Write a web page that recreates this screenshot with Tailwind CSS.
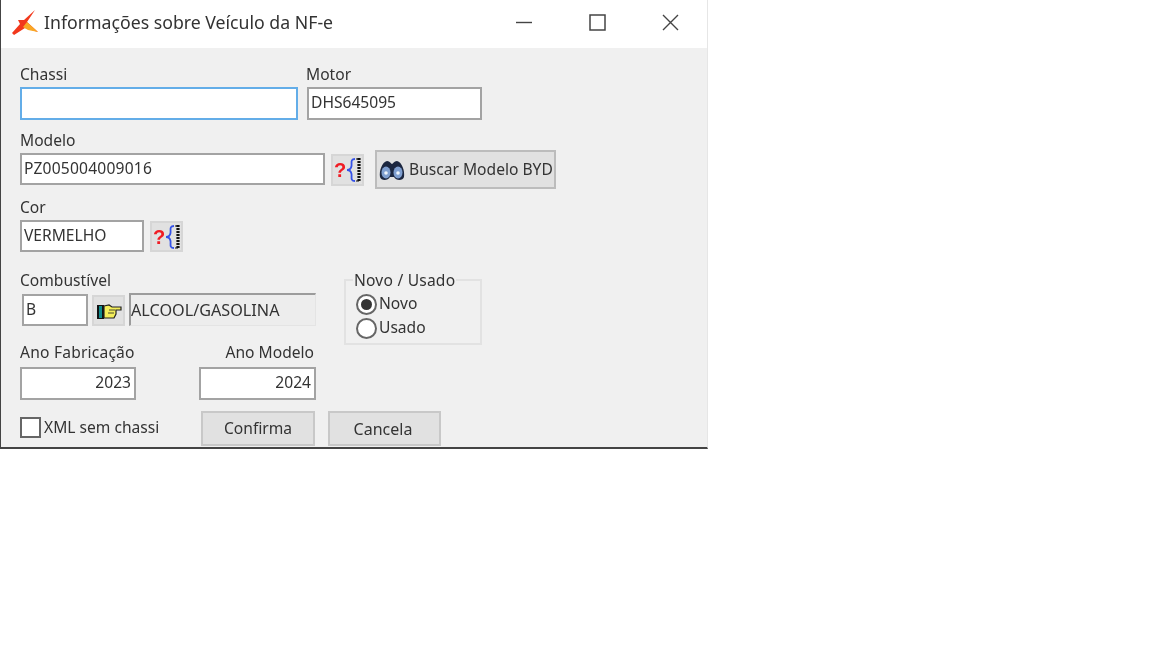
<!DOCTYPE html>
<html lang="en">
<head>
    <meta charset="UTF-8">
    <title>Informações sobre Veículo da NF-e</title>
    <script src="https://cdn.jsdelivr.net/npm/@tailwindcss/browser@4"></script>
</head>
<body class="bg-white font-['Noto_Sans',sans-serif] text-[15.6px] text-[#333]">
    <div class="w-[708px] h-[449px] flex flex-col border-l border-r border-b-2 border-l-[#444] border-r-[#e6e6e6] border-b-[#444] bg-[#f0f0f0] overflow-hidden blur-[0.35px]">

        <!-- title bar -->
        <div class="h-[48px] shrink-0 bg-white flex items-center pb-[3px]">
            <svg class="ml-[10px] w-[28px] h-[28px] shrink-0 blur-[0.5px]" viewBox="0 0 28 28">
                <path d="M24 1 L16 13 L27 23 L14 19 L3 26 L1 24 L9 15 L7 11 L13 11 Z" fill="#f2381c"/>
                <path d="M16 13 L27 23 L17 21 L12 18 Z" fill="#f9a825"/>
            </svg>
            <span class="ml-[5px] text-[17.7px]">Informações sobre Veículo da NF-e</span>
            <div class="ml-auto flex items-center mr-[28px] gap-[56px]">
                <svg class="w-[17px] h-[17px]" viewBox="0 0 17 17"><path d="M0 8.5H16" stroke="#444" stroke-width="1.4"/></svg>
                <svg class="w-[17px] h-[17px]" viewBox="0 0 17 17"><rect x="1" y="1" width="15" height="15" fill="none" stroke="#444" stroke-width="1.5"/></svg>
                <svg class="w-[17px] h-[17px]" viewBox="0 0 17 17"><path d="M1 1L16 16M16 1L1 16" stroke="#444" stroke-width="1.4"/></svg>
            </div>
        </div>

        <!-- form -->
        <div class="flex flex-col pl-[19px] pt-[17px]">
            <div class="flex h-[66px]">
                <div class="w-[286px]">
                    <div class="h-[22px] leading-[18px]">Chassi</div>
                    <input class="block w-[278px] h-[33px] px-[2px] pb-[3px] bg-white border-2 border-[#63ade8] outline-none">
                </div>
                <div class="ml-px">
                    <div class="h-[22px] leading-[18px] -ml-px">Motor</div>
                    <input class="block w-[175px] h-[33px] px-[2px] pb-[3px] bg-white border-2 border-[#a3a3a3] outline-none" value="DHS645095">
                </div>
            </div>

            <div class="flex h-[67px]">
                <div class="w-[311px]">
                    <div class="h-[22px] leading-[18px]">Modelo</div>
                    <input class="block w-[305px] h-[32px] px-[2px] pb-[2px] bg-white border-2 border-[#a3a3a3] outline-none tracking-[0.2px]" value="PZ005004009016">
                </div>
                <button class="mt-[23px] w-[33px] h-[32px] bg-[#e1e1e1] border-2 border-[#d6d6d6] flex items-center justify-center">
                    <svg class="w-[27px] h-[24px]" viewBox="0 0 27 24">
                        <text x="0" y="19" font-family="Liberation Sans" font-weight="700" font-size="20" fill="#f01c24">?</text>
                        <path d="M21 1C16 1 18 5 17.500 8C17 11 15.500 12 13 12C15.500 12 17 13 17.500 16C18 19 16 23 21 23" fill="none" stroke="#3552e8" stroke-width="1.800"/>
                        <path d="M25 0V24" stroke="#111" stroke-width="3.200" stroke-dasharray="2 1"/>
                        <path d="M22 1H25M22 23H25" stroke="#111" stroke-width="1.200"/>
                    </svg>
                </button>
                <button class="ml-[11px] mt-[19px] w-[181px] h-[39px] bg-[#e1e1e1] border-2 border-[#bcbcbc] flex items-center pl-px whitespace-nowrap">
                    <svg class="w-[28px] h-[24px] shrink-0" viewBox="0 0 28 24">
                        <path d="M2 19C1 13 4 4 9 3C12 3 13 6 14 6C15 6 16 3 19 3C24 4 27 13 26 19C25 23 18 23 16 19L12 19C10 23 3 23 2 19Z" fill="#1c2740"/>
                        <ellipse cx="8" cy="14.500" rx="4.500" ry="6" fill="#7f9fd0"/>
                        <ellipse cx="20" cy="14.500" rx="4.500" ry="6" fill="#7f9fd0"/>
                        <circle cx="8" cy="15" r="1.800" fill="#eef4fb"/>
                        <circle cx="20" cy="15" r="1.800" fill="#eef4fb"/>
                    </svg>
                    <span class="ml-[3px]">Buscar Modelo BYD</span>
                </button>
            </div>

            <div class="flex h-[75px]">
                <div class="w-[130px]">
                    <div class="h-[22px] leading-[18px]">Cor</div>
                    <input class="block w-[124px] h-[32px] px-[2px] pb-[2px] bg-white border-2 border-[#a3a3a3] outline-none" value="VERMELHO">
                </div>
                <button class="mt-[23px] w-[33px] h-[31px] bg-[#e1e1e1] border-2 border-[#d6d6d6] flex items-center justify-center">
                    <svg class="w-[27px] h-[24px]" viewBox="0 0 27 24">
                        <text x="0" y="19" font-family="Liberation Sans" font-weight="700" font-size="20" fill="#f01c24">?</text>
                        <path d="M21 1C16 1 18 5 17.500 8C17 11 15.500 12 13 12C15.500 12 17 13 17.500 16C18 19 16 23 21 23" fill="none" stroke="#3552e8" stroke-width="1.800"/>
                        <path d="M25 0V24" stroke="#111" stroke-width="3.200" stroke-dasharray="2 1"/>
                        <path d="M22 1H25M22 23H25" stroke="#111" stroke-width="1.200"/>
                    </svg>
                </button>
            </div>

            <div class="flex h-[72px]">
                <div class="w-[324px]">
                    <div class="h-[21px] leading-[15px]">Combustível</div>
                    <div class="flex items-start pl-[2px]">
                        <input class="block w-[66px] h-[32px] px-[2px] pb-[2px] bg-white border-2 border-[#a3a3a3] outline-none" value="B">
                        <button class="ml-[4px] mt-px w-[33px] h-[31px] bg-[#e1e1e1] border-2 border-[#d6d6d6] flex items-center justify-center">
                            <svg class="w-[26px] h-[18px]" viewBox="0 0 26 18">
                                <rect x="1" y="3" width="7" height="14" fill="#111"/>
                                <rect x="3" y="4" width="3" height="12" fill="#0f8b8d"/>
                                <path d="M8 4L13 3L16 5H25V8H20L20 12L18 16H8Z" fill="#f4ee5a" stroke="#222" stroke-width="1.200"/>
                                <path d="M13 8H19M12 11H18" stroke="#222" stroke-width="0.800"/>
                            </svg>
                        </button>
                        <div class="ml-[4px] -mt-px w-[187px] h-[33px] px-0 flex items-center bg-[#ededed] border-t-2 border-l-2 border-[#9c9c9c] border-r border-b border-r-[#e4e4e4] border-b-[#e4e4e4] text-[16.2px] whitespace-nowrap">ALCOOL/GASOLINA</div>
                    </div>
                </div>
                <div class="relative mt-[6px] w-[138px] h-[66px] border-2 border-[#e2e2e2] pl-[10px] pt-[11px]">
                    <span class="absolute left-[7px] -top-[10px] bg-[#f0f0f0] px-px leading-[18px] tracking-[0.2px]">Novo / Usado</span>
                    <label class="flex items-center h-[24px]">
                        <span class="w-[21px] h-[21px] rounded-full bg-white border-2 border-[#666] flex items-center justify-center shrink-0"><span class="w-[11px] h-[11px] rounded-full bg-[#333]"></span></span>
                        <span class="ml-[2px] -mt-px">Novo</span>
                    </label>
                    <label class="flex items-center h-[24px]">
                        <span class="w-[21px] h-[21px] rounded-full bg-white border-2 border-[#666] shrink-0"></span>
                        <span class="ml-[2px] -mt-px">Usado</span>
                    </label>
                </div>
            </div>

            <div class="flex h-[66px]">
                <div class="w-[179px]">
                    <div class="h-[22px] leading-[15px] tracking-[0.2px] whitespace-nowrap">Ano Fabricação</div>
                    <input class="block w-[116px] h-[33px] px-[3px] pb-[4px] text-right bg-white border-2 border-[#a3a3a3] outline-none" value="2023">
                </div>
                <div class="w-[117px]">
                    <div class="h-[22px] leading-[15px] text-right pr-[2px] whitespace-nowrap">Ano Modelo</div>
                    <input class="block w-[117px] h-[33px] px-[3px] pb-[4px] text-right bg-white border-2 border-[#a3a3a3] outline-none" value="2024">
                </div>
            </div>

            <div class="flex h-[35px]">
                <label class="w-[181px] flex items-start pt-[6px] whitespace-nowrap">
                    <span class="w-[21px] h-[21px] bg-white border-2 border-[#666] shrink-0"></span>
                    <span class="ml-[3px] leading-[20px]">XML sem chassi</span>
                </label>
                <button class="w-[114px] h-[35px] bg-[#e1e1e1] border-2 border-[#c8c8c8]">Confirma</button>
                <button class="ml-[13px] w-[113px] h-[35px] pr-[3px] text-[16px] bg-[#e1e1e1] border-2 border-[#c8c8c8]">Cancela</button>
            </div>
        </div>
    </div>
</body>
</html>
